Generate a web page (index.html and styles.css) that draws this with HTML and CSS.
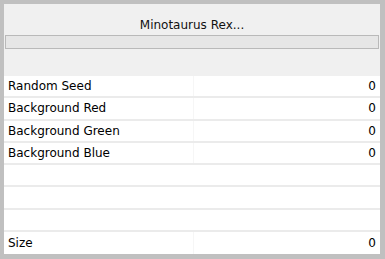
FILE: index.html
```html
<!DOCTYPE html>
<html lang="en">
<head>
  <meta charset="UTF-8">
  <title>Minotaurus Rex</title>
  <link rel="stylesheet" href="styles.css">
</head>
<body>
<div class="panel">
  <div class="title">Minotaurus Rex...</div>
  <div class="progress"></div>
  <div class="spacer"></div>
  <div class="props">
    <div class="row"><span class="name">Random Seed</span><span class="mid"></span><span class="val">0</span></div>
    <div class="row"><span class="name">Background Red</span><span class="mid"></span><span class="val">0</span></div>
    <div class="row"><span class="name">Background Green</span><span class="mid"></span><span class="val">0</span></div>
    <div class="row"><span class="name">Background Blue</span><span class="mid"></span><span class="val">0</span></div>
    <div class="row"></div>
    <div class="row"></div>
    <div class="row"></div>
    <div class="row last"><span class="name">Size</span><span class="mid"></span><span class="val">0</span></div>
  </div>
</div>
</body>
</html>
```
FILE: styles.css
```css
* { box-sizing: border-box; }
html, body { margin: 0; padding: 0; }
body { background: #c0c0c0; font-family: 'DejaVu Sans', sans-serif; font-size: 12px; color: #000; width: 385px; height: 259px; overflow: hidden; }
.panel { margin: 4px 5px 5px 4px; height: 250px; background: #f0f0f0; display: flex; flex-direction: column; }
.title { height: 31px; display: flex; align-items: center; justify-content: center; padding-top: 10px; color: #111; }
.progress { height: 14px; margin: 0 1px 0 1px; border: 1px solid #b9b9b9; background: #e6e6e6; }
.spacer { height: 27px; }
.props { flex: 1; display: flex; flex-direction: column; background: #fff; }
.row { height: 22.25px; display: flex; align-items: center; padding: 0 4px 0 4px; border-bottom: 2px solid #ebebeb; background: #fff; }
.row.last { border-bottom: none; }
.name { width: 185px; }
.mid { flex: 1; height: 100%; border-left: 1px solid #f6f6f6; }
.val { width: 20px; text-align: right; }
```
